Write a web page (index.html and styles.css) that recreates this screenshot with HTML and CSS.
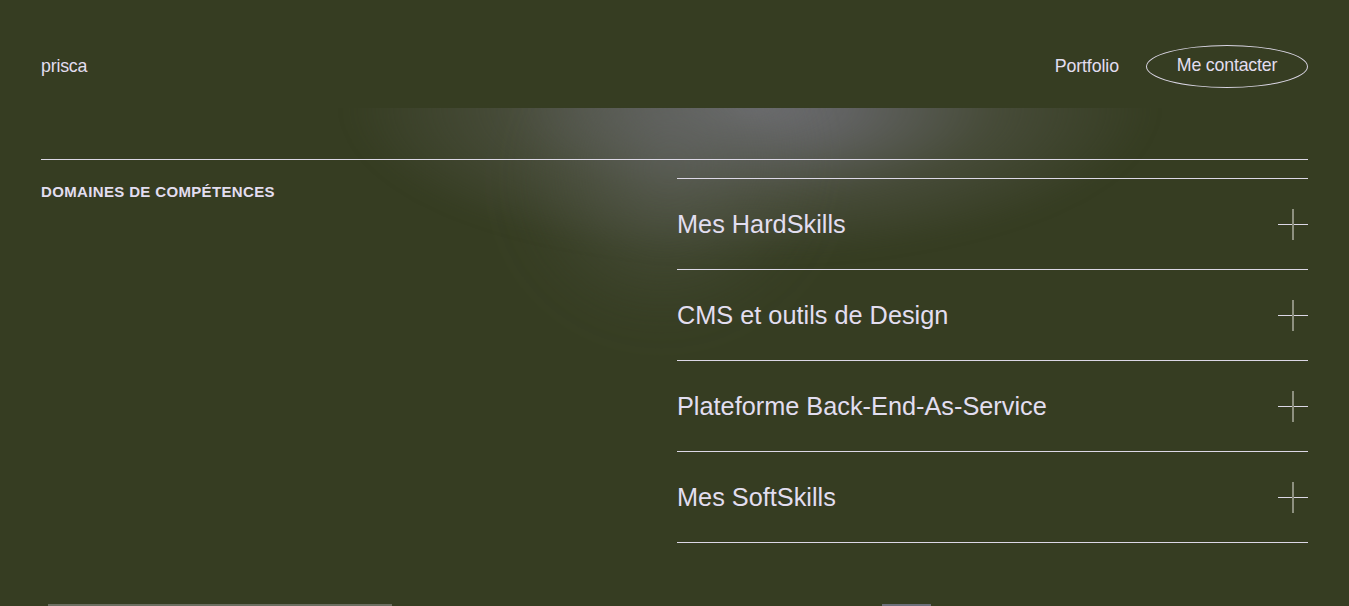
FILE: index.html
```html
<!DOCTYPE html>
<html lang="fr">
<head>
<meta charset="utf-8">
<title>prisca</title>
<link rel="stylesheet" href="styles.css">
</head>
<body>
<header class="topbar">
  <a class="brand" href="#">prisca</a>
  <nav class="nav">
    <a class="nav-link" href="#">Portfolio</a>
    <a class="nav-btn" href="#">Me contacter</a>
  </nav>
</header>
<section class="skills">
  <div class="glow glow-a"></div>
  <div class="glow glow-b"></div>
  <div class="skills-inner">
    <h2 class="skills-title">DOMAINES DE COMPÉTENCES</h2>
    <ul class="acc">
      <li class="acc-item"><span class="acc-label">Mes HardSkills</span><span class="plus"></span></li>
      <li class="acc-item"><span class="acc-label">CMS et outils de Design</span><span class="plus"></span></li>
      <li class="acc-item"><span class="acc-label">Plateforme Back-End-As-Service</span><span class="plus"></span></li>
      <li class="acc-item"><span class="acc-label">Mes SoftSkills</span><span class="plus"></span></li>
    </ul>
  </div>
</section>
<div class="next">
  <div class="next-a"></div>
  <div class="next-b"></div>
</div>
</body>
</html>
```

FILE: styles.css
```css
* { box-sizing: border-box; }
html, body { margin: 0; padding: 0; }
body {
  background: #363d22;
  color: #e2def0;
  font-family: "Liberation Sans", Arial, sans-serif;
  overflow: hidden;
  height: 606px;
}
a { color: inherit; text-decoration: none; }

.topbar {
  height: 108px;
  padding: 45px 41px 0;
  display: flex;
  align-items: flex-start;
  justify-content: space-between;
}
.brand {
  font-size: 17.8px;
  line-height: 43px;
  letter-spacing: -0.2px;
}
.nav {
  display: flex;
  align-items: center;
  gap: 27px;
  height: 43px;
}
.nav-link {
  font-size: 17.8px;
  letter-spacing: -0.1px;
  padding-bottom: 1px;
}
.nav-btn {
  font-size: 17.8px;
  letter-spacing: -0.2px;
  width: 162px;
  height: 43px;
  border: 1px solid #d9d5e3;
  border-radius: 50%;
  display: flex;
  align-items: center;
  justify-content: center;
  padding-bottom: 2px;
}

.skills {
  position: relative;
  overflow: hidden;
  padding: 51px 41px 0;
  height: 496px;
}
.glow {
  position: absolute;
  pointer-events: none;
  border-radius: 50%;
}
.glow-a {
  left: 345px;
  top: -150px;
  width: 810px;
  height: 300px;
  background: radial-gradient(closest-side, rgba(112,112,118,1) 0%, rgba(104,104,108,0.85) 25%, rgba(88,90,80,0.5) 60%, rgba(54,61,34,0) 100%);
  filter: blur(8px);
}
.glow-b {
  left: 520px;
  top: -100px;
  width: 300px;
  height: 320px;
  background: radial-gradient(closest-side, rgba(100,102,100,0.55) 0%, rgba(88,92,80,0.38) 45%, rgba(54,61,34,0) 100%);
  transform: rotate(40deg);
  filter: blur(28px);
}
.skills-inner {
  position: relative;
  border-top: 1px solid #dcd8e6;
  display: grid;
  grid-template-columns: 1fr 1fr;
  column-gap: 5px;
}
.skills-title {
  margin: 23px 0 0;
  font-size: 15px;
  font-weight: bold;
  letter-spacing: 0.35px;
}
.acc {
  list-style: none;
  margin: 18px 0 0;
  padding: 0;
  border-bottom: 1px solid #dcd8e6;
}
.acc-item {
  height: 91px;
  border-top: 1px solid #dcd8e6;
  display: flex;
  align-items: center;
  justify-content: space-between;
}
.acc-label {
  font-size: 25.3px;
  margin-top: 1px;
}
.plus {
  position: relative;
  width: 30px;
  height: 31px;
  margin-top: 1px;
}
.plus::before {
  content: "";
  position: absolute;
  left: 0;
  right: 0;
  top: 15px;
  height: 1px;
  background: #dcd8e6;
}
.plus::after {
  content: "";
  position: absolute;
  left: 14px;
  top: 0;
  bottom: 0;
  width: 2px;
  background: #8d907f;
}

.next {
  height: 2px;
  position: relative;
}
.next-a {
  position: absolute;
  left: 48px;
  width: 344px;
  top: 0;
  height: 2px;
  background: #6c6f62;
}
.next-b {
  position: absolute;
  left: 882px;
  width: 49px;
  top: 0;
  height: 2px;
  background: #6c6f7a;
}
```
